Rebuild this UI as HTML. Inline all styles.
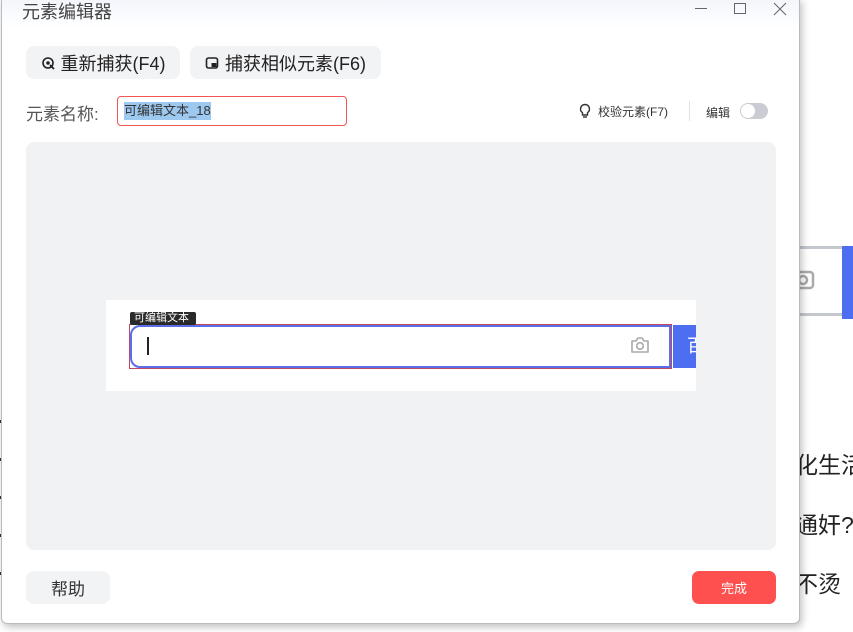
<!DOCTYPE html>
<html><head><meta charset="utf-8"><style>
*{margin:0;padding:0;box-sizing:border-box}
body{width:853px;height:632px;overflow:hidden;background:#fff;position:relative;font-family:"Liberation Sans","Noto Sans CJK SC",sans-serif;color:#333}
.a{position:absolute}
.btn{position:absolute;background:#f2f3f5;border-radius:8px;font-size:18px;color:#222;display:flex;align-items:center;justify-content:center}
</style></head><body>
<!-- background page -->
<div class="a" style="left:795px;top:246px;width:50px;height:70px;border:3px solid #c4c7ce;border-right:none;background:#fff"></div>
<svg class="a" style="left:790px;top:266px" width="26" height="30"><rect x="3" y="6" width="20" height="16" rx="3" fill="none" stroke="#aaa" stroke-width="2.5"/><circle cx="13" cy="14" r="4" fill="none" stroke="#aaa" stroke-width="2.5"/></svg>
<div class="a" style="left:842px;top:246px;width:11px;height:73px;background:#4e6ef2"></div>
<div class="a" style="left:795px;top:446px;font-size:23px;color:#222;white-space:nowrap">化生活</div>
<div class="a" style="left:795px;top:506px;font-size:23px;color:#222;white-space:nowrap">通奸?</div>
<div class="a" style="left:795px;top:565px;font-size:23px;color:#222;white-space:nowrap">不烫</div>
<div class="a" style="left:0;top:400px;width:3px;height:190px;background:repeating-linear-gradient(#fff 0 20px,#333 20px 23px,#fff 23px 38px)"></div>
<!-- dialog -->
<div class="a" style="left:1px;top:-2px;width:799px;height:626px;background:#fff;border:1px solid #bbb;border-radius:0 0 6px 6px;box-shadow:2px 3px 8px rgba(0,0,0,.25)"></div>
<div class="a" style="left:2px;top:0;width:797px;height:28px;background:linear-gradient(#f4f6fc,#fff)"></div>
<div class="a" style="left:22px;top:-2px;font-size:18px;color:#444">元素编辑器</div>
<div class="a" style="left:695px;top:8px;width:12px;height:1px;background:#666"></div>
<div class="a" style="left:734px;top:3px;width:12px;height:11px;border:1px solid #666"></div>
<svg class="a" style="left:773px;top:2px" width="14" height="14"><path d="M1 1L13 13M13 1L1 13" stroke="#666" stroke-width="1"/></svg>
<div class="btn" style="left:26px;top:46px;width:154px;height:33px"><svg width="14" height="14" style="margin-right:6px"><circle cx="7" cy="7" r="5" fill="none" stroke="#222" stroke-width="1.6"/><circle cx="7" cy="7" r="1.8" fill="#222"/><path d="M9 9l4 4" stroke="#222" stroke-width="1.8"/></svg>重新捕获(F4)</div>
<div class="btn" style="left:190px;top:46px;width:191px;height:33px"><svg width="14" height="14" style="margin-right:6px"><rect x="1.5" y="2" width="11" height="10" rx="2" fill="none" stroke="#222" stroke-width="1.6"/><rect x="6.5" y="7" width="5" height="4" fill="#222"/></svg>捕获相似元素(F6)</div>
<div class="a" style="left:26px;top:100px;font-size:17px;color:#555">元素名称:</div>
<div class="a" style="left:117px;top:96px;width:230px;height:30px;border:1px solid #f05656;border-radius:4px"></div>
<div class="a" style="left:124px;top:102px;height:18px;background:#9dc8ef;font-size:13px;color:#333;line-height:18px">可编辑文本_18</div>
<svg class="a" style="left:578px;top:103px" width="14" height="16"><path d="M7 1.5a4.5 4.5 0 0 0-2.5 8.2V12h5V9.7A4.5 4.5 0 0 0 7 1.5z" fill="none" stroke="#333" stroke-width="1.4"/><path d="M5 14h4" stroke="#333" stroke-width="1.4"/></svg>
<div class="a" style="left:598px;top:103px;font-size:12px;color:#333">校验元素(F7)</div>
<div class="a" style="left:689px;top:101px;width:1px;height:20px;background:#e2e2e2"></div>
<div class="a" style="left:706px;top:104px;font-size:12px;color:#333">编辑</div>
<div class="a" style="left:740px;top:103px;width:28px;height:16px;border-radius:8px;background:#c9ccd2"></div>
<div class="a" style="left:741px;top:104px;width:14px;height:14px;border-radius:7px;background:#fff"></div>
<!-- canvas -->
<div class="a" style="left:26px;top:142px;width:750px;height:408px;background:#f1f2f4;border-radius:8px"></div>
<div class="a" style="left:106px;top:300px;width:590px;height:91px;background:#fff"></div>
<div class="a" style="left:130px;top:325px;width:541px;height:43px;border:2px solid #5a6ee8;border-radius:10px 0 0 10px;background:#fff"></div>
<div class="a" style="left:129px;top:324px;width:543px;height:45px;border:1px solid #c04860"></div>
<div class="a" style="left:147px;top:337px;width:2px;height:18px;background:#222"></div>
<svg class="a" style="left:629px;top:335px" width="22" height="20"><path d="M3 6h4l2-3h4l2 3h4v11H3z" fill="none" stroke="#aaa" stroke-width="1.6" stroke-linejoin="round"/><circle cx="11" cy="11" r="3.3" fill="none" stroke="#aaa" stroke-width="1.6"/></svg>
<div class="a" style="left:673px;top:325px;width:23px;height:43px;background:#4e6ef2;color:#fff;font-size:18px;line-height:43px;padding-left:14px;overflow:hidden">百</div>
<div class="a" style="left:130px;top:312px;width:66px;height:13px;background:#2a2a2a;border-radius:2px;color:#fff;font-size:11px;line-height:13px;padding-left:4px">可编辑文本</div>
<!-- footer -->
<div class="btn" style="left:26px;top:571px;width:84px;height:33px;font-size:17px;color:#333">帮助</div>
<div class="a" style="left:692px;top:571px;width:84px;height:33px;background:#ff5050;border-radius:7px;color:#fff;font-size:13px;display:flex;align-items:center;justify-content:center">完成</div>
</body></html>
